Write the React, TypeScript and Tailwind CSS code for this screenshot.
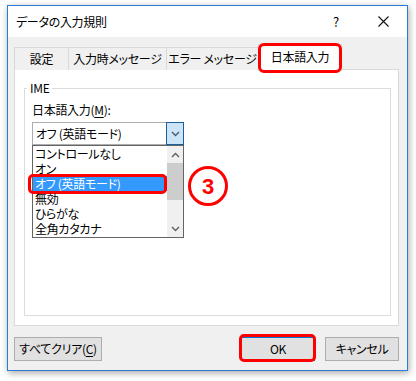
import React from 'react';

const font = "font-['Noto_Sans_CJK_JP','Noto_Sans',sans-serif] [font-feature-settings:'palt'] tracking-[-0.3px]";

const options = ['コントロールなし', 'オン', 'オフ (英語モード)', '無効', 'ひらがな', '全角カタカナ'];

function Chevron({ dir, className }: { dir: 'up' | 'down'; className?: string }) {
  return (
    <svg width="9" height="6" viewBox="0 0 9 6" className={className}>
      <polyline
        points={dir === 'up' ? '1,5 4.5,1.5 8,5' : '1,1 4.5,4.5 8,1'}
        fill="none"
        stroke="currentColor"
        strokeWidth="1.4"
      />
    </svg>
  );
}

function Tab({ label, width }: { label: string; width: string }) {
  return (
    <div
      className={`${width} h-[23px] flex items-center justify-center whitespace-nowrap border border-b-0 border-[#d9d9d9] bg-[#f0f0f0] text-[12px] text-black -ml-px first:ml-0`}
    >
      {label}
    </div>
  );
}

export default function App() {
  return (
    <div className={`w-[416px] h-[381px] bg-white pt-[5px] pl-[7px] ${font}`}>
      <div className="w-[401px] h-[366px] flex flex-col border border-[#2b7bd4] bg-[#f0f0f0] shadow-[1px_2px_7px_rgba(0,0,0,0.35)]">
        {/* title bar */}
        <div className="h-[31px] bg-white flex items-center pl-[8px] text-[12px] text-black">
          <span className="flex-1">データの入力規則</span>
          <span className="w-[12px] text-center mr-[36px] text-[13px]">?</span>
          <svg width="11" height="11" viewBox="0 0 11 11" className="mr-[18px]">
            <path d="M0.5 0.5 L10.5 10.5 M10.5 0.5 L0.5 10.5" stroke="#111" strokeWidth="1.1" />
          </svg>
        </div>

        {/* body */}
        <div className="flex-1 flex flex-col pt-[7px] pl-[6px] pr-[8px] pb-[9px]">
          {/* tabs */}
          <div className="h-[26px] flex items-end relative z-10">
            <Tab label="設定" width="w-[55px]" />
            <Tab label="入力時メッセージ" width="w-[99px]" />
            <Tab label="エラー メッセージ" width="w-[93px]" />
            <div className="relative w-[84px] h-[27px] -mb-px -ml-px flex items-center justify-center whitespace-nowrap border border-b-0 border-[#d9d9d9] bg-white text-[12px] text-black pb-[2px]">
              日本語入力
              <div className="absolute -left-[1px] -right-[1px] -top-[2px] -bottom-[2px] border-[3px] border-[#ff0000] rounded-[6px]" />
            </div>
          </div>

          {/* panel */}
          <div className="-mt-px h-[257px] bg-white border border-[#d9d9d9] pt-[10px] pl-[9px] pr-[7px]">
            <fieldset className="h-[236px] border border-[#dcdcdc] px-0">
              <legend className="ml-[2px] px-[3px] text-[12px] leading-[16px] text-black">IME</legend>
              <div className="relative pt-[6px] pl-[7px] text-[12px] text-black">
                <div className="h-[16px] leading-[16px] mb-[4px]">
                  日本語入力(<span className="underline underline-offset-2">M</span>):
                </div>

                {/* combobox */}
                <div className="w-[152px] h-[23px] flex border border-[#adadad] bg-white">
                  <div className="flex-1 flex items-center pl-[3px] whitespace-nowrap">オフ (英語モード)</div>
                  <div className="w-[18px] -my-px -mr-px flex items-center justify-center border border-[#1c5f9e] bg-[#cce4f7] text-[#4a5a6a]">
                    <Chevron dir="down" />
                  </div>
                </div>

                {/* dropdown list */}
                <div className="w-[152px] h-[93px] flex border border-[#646464] bg-white">
                  <div className="flex-1 flex flex-col">
                    {options.map((o, i) => (
                      <div
                        key={o}
                        className={`relative h-[15px] leading-[15px] pl-[2px] whitespace-nowrap ${
                          i === 2 ? 'bg-[#3399ff] text-white' : 'text-black'
                        }`}
                      >
                        {o}
                        {i === 2 && (
                          <div className="absolute -left-[5px] right-0 -top-[2px] -bottom-[3px] border-[3px] border-[#ff0000] rounded-[5px]" />
                        )}
                      </div>
                    ))}
                  </div>
                  <div className="w-[16px] flex flex-col bg-[#f0f0f0]">
                    <div className="h-[17px] flex items-center justify-center text-[#606060]">
                      <Chevron dir="up" />
                    </div>
                    <div className="h-[37px] bg-[#cdcdcd]" />
                    <div className="flex-1" />
                    <div className="h-[17px] flex items-center justify-center text-[#606060]">
                      <Chevron dir="down" />
                    </div>
                  </div>
                </div>

                {/* annotation */}
                <div className="absolute left-[163px] top-[70px] w-[40px] h-[40px] rounded-full border-[3px] border-[#ff0000] bg-white flex items-center justify-center font-['Liberation_Sans',sans-serif] font-bold text-[22px] text-[#ff0000] tracking-normal [font-feature-settings:normal]">
                  3
                </div>
              </div>
            </fieldset>
          </div>

          {/* buttons */}
          <div className="mt-[11px] h-[24px] flex text-[12px] text-black">
            <div className="w-[88px] h-[24px] flex items-center justify-center whitespace-nowrap border border-[#adadad] bg-[#e1e1e1]">
              すべてクリア(<span className="underline underline-offset-2">C</span>)
            </div>
            <div className="flex-1" />
            <div className="relative w-[74px] h-[24px] flex items-center justify-center border border-[#0078d7] bg-[#e1e1e1]">
              OK
              <div className="absolute -left-[3px] -right-[2px] -top-[4px] -bottom-[2px] border-[3px] border-[#ff0000] rounded-[5px]" />
            </div>
            <div className="ml-[10px] w-[74px] h-[24px] flex items-center justify-center whitespace-nowrap border border-[#adadad] bg-[#e1e1e1]">
              キャンセル
            </div>
          </div>
        </div>
      </div>
    </div>
  );
}
